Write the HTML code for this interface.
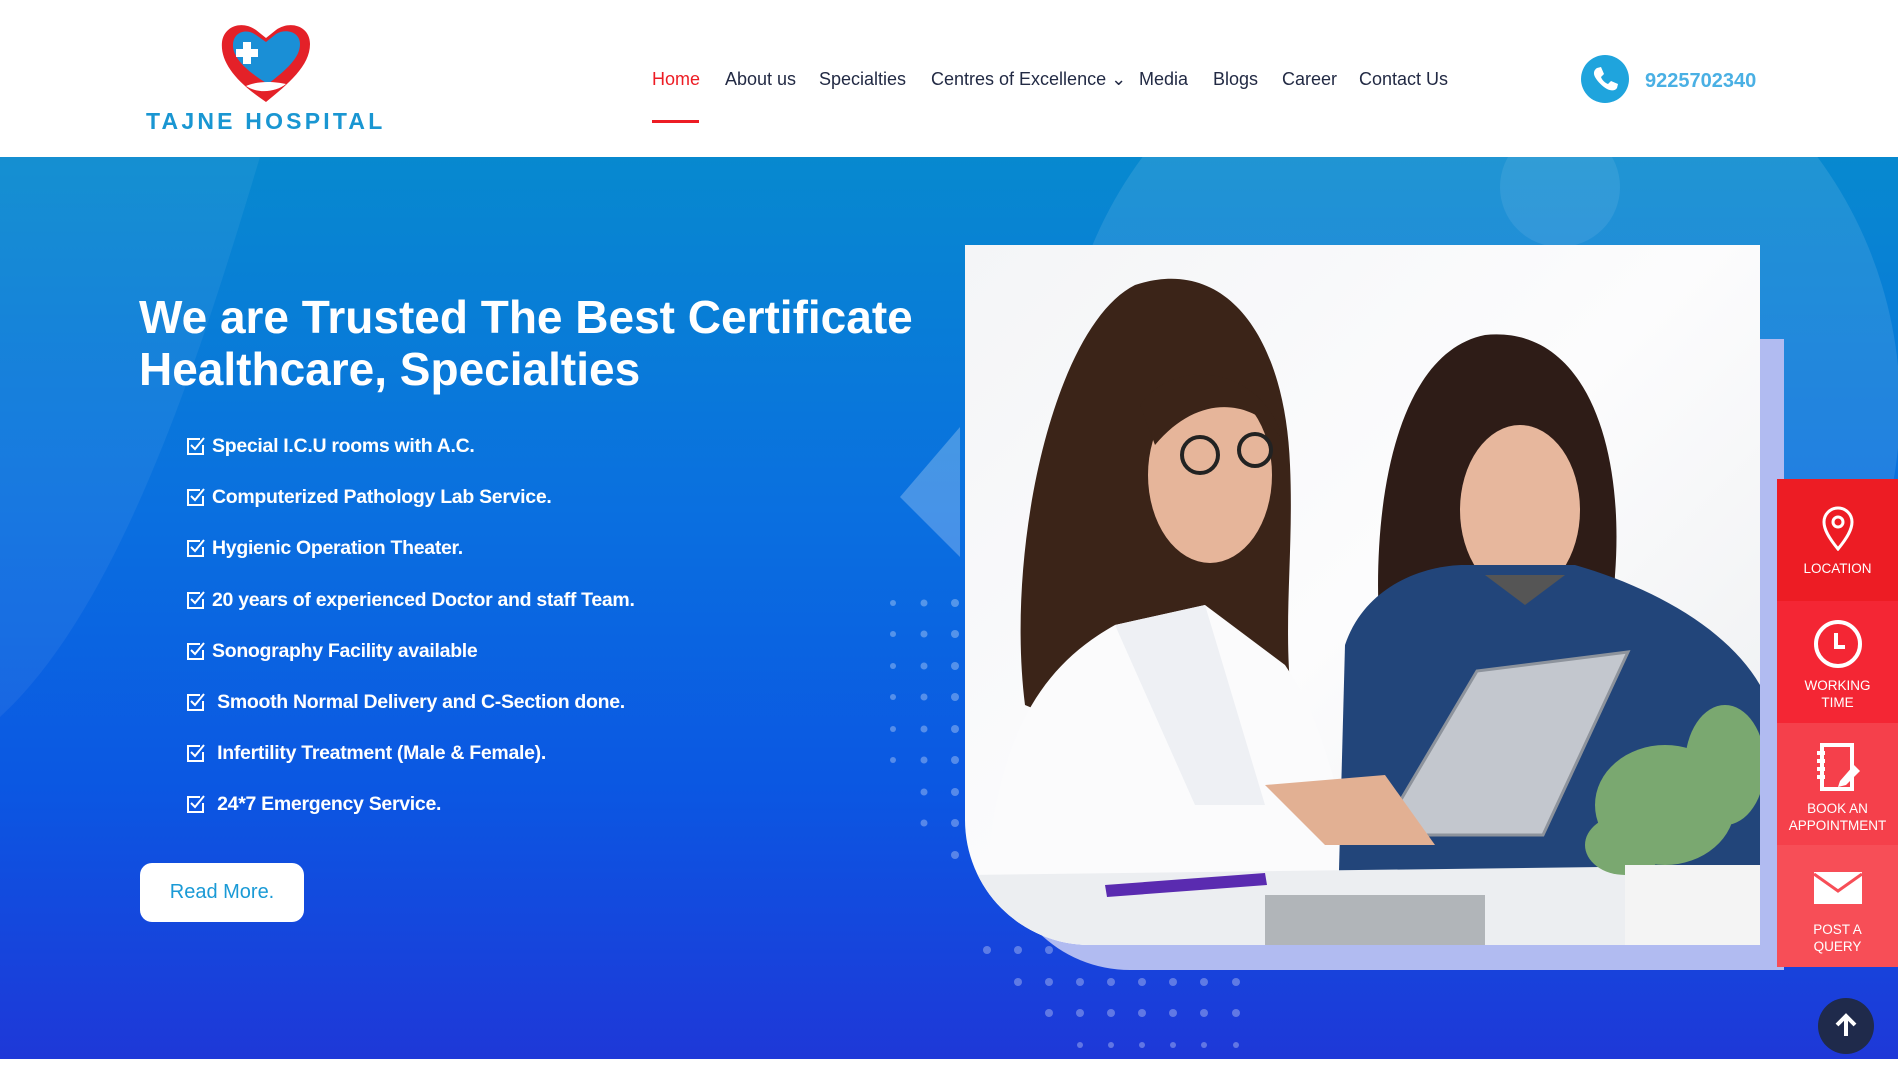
<!DOCTYPE html>
<html><head><meta charset="utf-8"><style>
*{margin:0;padding:0;box-sizing:border-box}
body{width:1898px;height:1076px;overflow:hidden;background:#fff;font-family:"Liberation Sans",Arial,sans-serif;position:relative}
header{position:absolute;left:0;top:0;width:1898px;height:157px;background:#fff}
.logo-t{position:absolute;left:146px;top:108px;font-size:23px;font-weight:bold;color:#1996d2;letter-spacing:3.2px}
nav{position:absolute;top:69px;left:652px;font-size:18px;color:#222a44}
nav span{position:absolute;white-space:nowrap}
.ul{position:absolute;left:652px;top:120px;width:47px;height:3px;background:#ed1c24}
.phone{position:absolute;left:1581px;top:55px;width:48px;height:48px;border-radius:50%;background:#1fa4dd}
.num{position:absolute;left:1645px;top:70px;font-size:20px;font-weight:bold;color:#4ab0e4}
.hero{position:absolute;left:0;top:157px;width:1898px;height:902px;overflow:hidden;background:linear-gradient(180deg,#0789cf 0%,#0a6fe0 40%,#0b57e2 70%,#1e38d8 100%)}
h1{position:absolute;left:139px;top:291px;font-size:46px;line-height:52px;color:#fff;font-weight:bold}
ul{list-style:none;position:absolute;left:186px;top:435px}
li{height:51.2px;font-size:19.5px;font-weight:bold;color:#fff;letter-spacing:-0.3px;display:flex;align-items:flex-start}
li svg{margin-right:6px;margin-top:1px}
.btn{position:absolute;left:140px;top:863px;width:164px;height:59px;border-radius:12px;background:#fff;color:#1a9ad6;font-size:20px;line-height:59px;text-align:center}
.lav{position:absolute;left:1000px;top:339px;width:784px;height:631px;background:#b1bbf1;border-bottom-left-radius:130px}
.img{position:absolute;left:965px;top:245px;width:795px;height:700px;background:linear-gradient(135deg,#f4f5f7,#fcfcfd 50%,#eceef0);border-bottom-left-radius:125px;overflow:hidden}
.side{position:absolute;left:1777px;top:479px;width:121px}
.side div{height:122px;color:#fff;font-size:13.5px;text-align:center;position:relative}
.side svg{display:block;margin:0 auto}
.top{position:absolute;left:1818px;top:998px;width:56px;height:56px;border-radius:50%;background:#1f2a4b}
</style></head><body>
<header>
<svg style="position:absolute;left:216px;top:22px" width="100" height="82" viewBox="0 0 100 82">
<path d="M50 80 C20 60 4 40 6 20 C8 4 26 -2 40 8 L50 16 L60 8 C74 -2 94 4 94 22 C94 44 72 62 50 80Z" fill="#e42128"/>
<path d="M52 62 C32 50 16 36 17 22 C18 10 30 6 40 13 L50 20 L60 12 C70 6 84 10 84 22 C84 36 70 48 52 62Z" fill="#1a8fd6"/>
<rect x="27" y="20" width="8" height="22" fill="#fff"/><rect x="20" y="27" width="22" height="8" fill="#fff"/>
<path d="M30 64 C44 58 60 60 70 62 C60 70 42 72 30 64Z" fill="#fff"/>
</svg>
<div class="logo-t">TAJNE HOSPITAL</div>
<nav>
<span style="left:0;color:#ed1c24">Home</span>
<span style="left:73px">About us</span>
<span style="left:167px">Specialties</span>
<span style="left:279px">Centres of Excellence ⌄</span>
<span style="left:487px">Media</span>
<span style="left:561px">Blogs</span>
<span style="left:630px">Career</span>
<span style="left:707px">Contact Us</span>
</nav>
<div class="ul"></div>
<div class="phone"><svg width="48" height="48" viewBox="0 0 48 48"><path d="M16 13 L20 12 L23 19 L20 22 C21 25 24 28 27 29 L30 26 L37 29 L36 33 C34 36 30 36 26 34 C21 31 17 27 14 22 C12 18 13 15 16 13Z" fill="#fff"/></svg></div>
<div class="num">9225702340</div>
</header>
<div class="hero">
<svg width="1898" height="902" style="position:absolute;left:0;top:0">
<circle cx="1480" cy="250" r="420" fill="#fff" opacity="0.1"/>
<circle cx="1560" cy="30" r="60" fill="#fff" opacity="0.08"/>
<path d="M0 0 L260 0 C200 200 120 450 0 560Z" fill="#fff" opacity="0.06"/>
<path d="M960 270 L900 340 L960 400Z" fill="#fff" opacity="0.25"/>
<g fill="#fff" opacity="0.3">
<circle cx="893" cy="446" r="3"/><circle cx="924" cy="446" r="3.5"/><circle cx="955" cy="446" r="4"/>
<circle cx="893" cy="477" r="3"/><circle cx="924" cy="477" r="3.5"/><circle cx="955" cy="477" r="4"/>
<circle cx="893" cy="509" r="3"/><circle cx="924" cy="509" r="3.5"/><circle cx="955" cy="509" r="4"/>
<circle cx="893" cy="540" r="3"/><circle cx="924" cy="540" r="3.5"/><circle cx="955" cy="540" r="4"/>
<circle cx="893" cy="572" r="3"/><circle cx="924" cy="572" r="3.5"/><circle cx="955" cy="572" r="4"/>
<circle cx="893" cy="603" r="3"/><circle cx="924" cy="603" r="3.5"/><circle cx="955" cy="603" r="4"/>
<circle cx="924" cy="635" r="3.5"/><circle cx="955" cy="635" r="4"/>
<circle cx="924" cy="666" r="3.5"/><circle cx="955" cy="666" r="4"/>
<circle cx="955" cy="698" r="4"/>
<circle cx="987" cy="793" r="4"/><circle cx="1018" cy="793" r="4"/><circle cx="1049" cy="793" r="4"/><circle cx="1080" cy="793" r="4"/><circle cx="1111" cy="793" r="4"/><circle cx="1142" cy="793" r="4"/><circle cx="1173" cy="793" r="4"/><circle cx="1204" cy="793" r="4"/><circle cx="1236" cy="793" r="4"/>
<circle cx="1018" cy="825" r="4"/><circle cx="1049" cy="825" r="4"/><circle cx="1080" cy="825" r="4"/><circle cx="1111" cy="825" r="4"/><circle cx="1142" cy="825" r="4"/><circle cx="1173" cy="825" r="4"/><circle cx="1204" cy="825" r="4"/><circle cx="1236" cy="825" r="4"/>
<circle cx="1049" cy="856" r="4"/><circle cx="1080" cy="856" r="4"/><circle cx="1111" cy="856" r="4"/><circle cx="1142" cy="856" r="4"/><circle cx="1173" cy="856" r="4"/><circle cx="1204" cy="856" r="4"/><circle cx="1236" cy="856" r="4"/>
<circle cx="1080" cy="888" r="3"/><circle cx="1111" cy="888" r="3"/><circle cx="1142" cy="888" r="3"/><circle cx="1173" cy="888" r="3"/><circle cx="1204" cy="888" r="3"/><circle cx="1236" cy="888" r="3"/>
</g>
</svg>
</div>
<h1>We are Trusted The Best Certificate<br>Healthcare, Specialties</h1>
<ul>
<li><svg width="20" height="20" viewBox="0 0 20 20" fill="none" stroke="#fff" stroke-width="2"><path d="M14 3H2v15h15V9"/><path d="M5 9l4 4 9-11"/></svg>Special I.C.U rooms with A.C.</li>
<li><svg width="20" height="20" viewBox="0 0 20 20" fill="none" stroke="#fff" stroke-width="2"><path d="M14 3H2v15h15V9"/><path d="M5 9l4 4 9-11"/></svg>Computerized Pathology Lab Service.</li>
<li><svg width="20" height="20" viewBox="0 0 20 20" fill="none" stroke="#fff" stroke-width="2"><path d="M14 3H2v15h15V9"/><path d="M5 9l4 4 9-11"/></svg>Hygienic Operation Theater.</li>
<li><svg width="20" height="20" viewBox="0 0 20 20" fill="none" stroke="#fff" stroke-width="2"><path d="M14 3H2v15h15V9"/><path d="M5 9l4 4 9-11"/></svg>20 years of experienced Doctor and staff Team.</li>
<li><svg width="20" height="20" viewBox="0 0 20 20" fill="none" stroke="#fff" stroke-width="2"><path d="M14 3H2v15h15V9"/><path d="M5 9l4 4 9-11"/></svg>Sonography Facility available</li>
<li><svg width="20" height="20" viewBox="0 0 20 20" fill="none" stroke="#fff" stroke-width="2"><path d="M14 3H2v15h15V9"/><path d="M5 9l4 4 9-11"/></svg>&nbsp;Smooth Normal Delivery and C-Section done.</li>
<li><svg width="20" height="20" viewBox="0 0 20 20" fill="none" stroke="#fff" stroke-width="2"><path d="M14 3H2v15h15V9"/><path d="M5 9l4 4 9-11"/></svg>&nbsp;Infertility Treatment (Male &amp; Female).</li>
<li><svg width="20" height="20" viewBox="0 0 20 20" fill="none" stroke="#fff" stroke-width="2"><path d="M14 3H2v15h15V9"/><path d="M5 9l4 4 9-11"/></svg>&nbsp;24*7 Emergency Service.</li>
</ul>
<div class="btn">Read More.</div>
<div class="lav"></div>
<div class="img">
<svg width="795" height="700" viewBox="0 0 795 700">
<path d="M60 460 C40 300 90 80 170 40 C260 10 320 90 325 220 C330 330 310 420 340 520 L250 540 Z" fill="#3b2418"/>
<ellipse cx="245" cy="230" rx="62" ry="88" fill="#e6b59a"/>
<path d="M175 160 C210 110 300 120 320 200 C300 160 240 140 190 200Z" fill="#3b2418"/>
<circle cx="235" cy="210" r="18" fill="none" stroke="#222" stroke-width="4"/><circle cx="290" cy="205" r="16" fill="none" stroke="#222" stroke-width="4"/>
<path d="M20 700 C20 520 60 430 150 380 L240 360 L320 420 C360 480 380 560 400 700Z" fill="#fbfbfc"/>
<path d="M150 380 L240 360 L300 560 L230 560Z" fill="#eef0f4"/>
<path d="M420 440 C400 300 420 110 520 90 C620 80 660 200 650 330 C645 420 660 480 690 540 L460 520Z" fill="#2e1c17"/>
<ellipse cx="555" cy="265" rx="60" ry="85" fill="#e7b79d"/>
<path d="M372 700 L380 400 C400 340 460 320 500 320 L610 320 C680 340 760 380 795 440 L795 640 L620 700Z" fill="#22457a"/>
<path d="M520 330 L560 360 L600 330Z" fill="#555"/>
<path d="M415 590 L512 426 L663 407 L578 590Z" fill="#c3c7ce" stroke="#8d939c" stroke-width="3"/>
<path d="M300 540 L420 530 L470 600 L360 600Z" fill="#e2b093"/>
<path d="M0 630 L795 620 L795 700 L0 700Z" fill="#eceef1"/>
<path d="M140 640 L300 628 L302 640 L142 652Z" fill="#5a2bb0"/>
<path d="M300 650 L520 650 L520 700 L300 700Z" fill="#8b8f95" opacity="0.6"/>
<g fill="#7aa870"><ellipse cx="700" cy="560" rx="70" ry="60"/><ellipse cx="760" cy="520" rx="40" ry="60"/><ellipse cx="660" cy="600" rx="40" ry="30"/></g>
<rect x="660" y="620" width="135" height="80" fill="#f4f4f4"/>
</svg>
</div>
<div class="side">
<div style="background:#ed1c24"><svg style="padding-top:26px" width="40" height="72" viewBox="0 0 40 46"><path d="M20 44 C10 32 6 24 6 17 A14 14 0 0 1 34 17 C34 24 30 32 20 44Z" fill="none" stroke="#fff" stroke-width="3"/><circle cx="20" cy="17" r="5" fill="none" stroke="#fff" stroke-width="3"/></svg><div style="margin-top:10px">LOCATION</div></div>
<div style="background:#f42634"><svg style="padding-top:18px" width="50" height="68" viewBox="0 0 50 50"><circle cx="25" cy="25" r="22" fill="none" stroke="#fff" stroke-width="4"/><path d="M23 14v14h9" fill="none" stroke="#fff" stroke-width="4"/></svg><div style="margin-top:8px;line-height:17px">WORKING<br>TIME</div></div>
<div style="background:#f5404b"><svg style="padding-top:20px" width="48" height="68" viewBox="0 0 48 48"><rect x="8" y="2" width="30" height="44" fill="none" stroke="#fff" stroke-width="4"/><path d="M3 10h8M3 18h8M3 26h8M3 34h8" stroke="#fff" stroke-width="4"/><path d="M26 38 L40 22 L46 28 L32 42 L24 44Z" fill="#fff"/></svg><div style="margin-top:9px;line-height:17px">BOOK AN<br>APPOINTMENT</div></div>
<div style="background:#f74e57"><svg style="padding-top:26px" width="50" height="60" viewBox="0 0 50 34"><rect x="1" y="1" width="48" height="32" fill="#fff"/><path d="M1 3 L25 20 L49 3" fill="none" stroke="#f74e57" stroke-width="3"/></svg><div style="margin-top:16px;line-height:17px">POST A<br>QUERY</div></div>
</div>
<div class="top"><svg width="56" height="56" viewBox="0 0 56 56"><path d="M28 38V18M19 27l9-9 9 9" fill="none" stroke="#fff" stroke-width="4"/></svg></div>
</body></html>
